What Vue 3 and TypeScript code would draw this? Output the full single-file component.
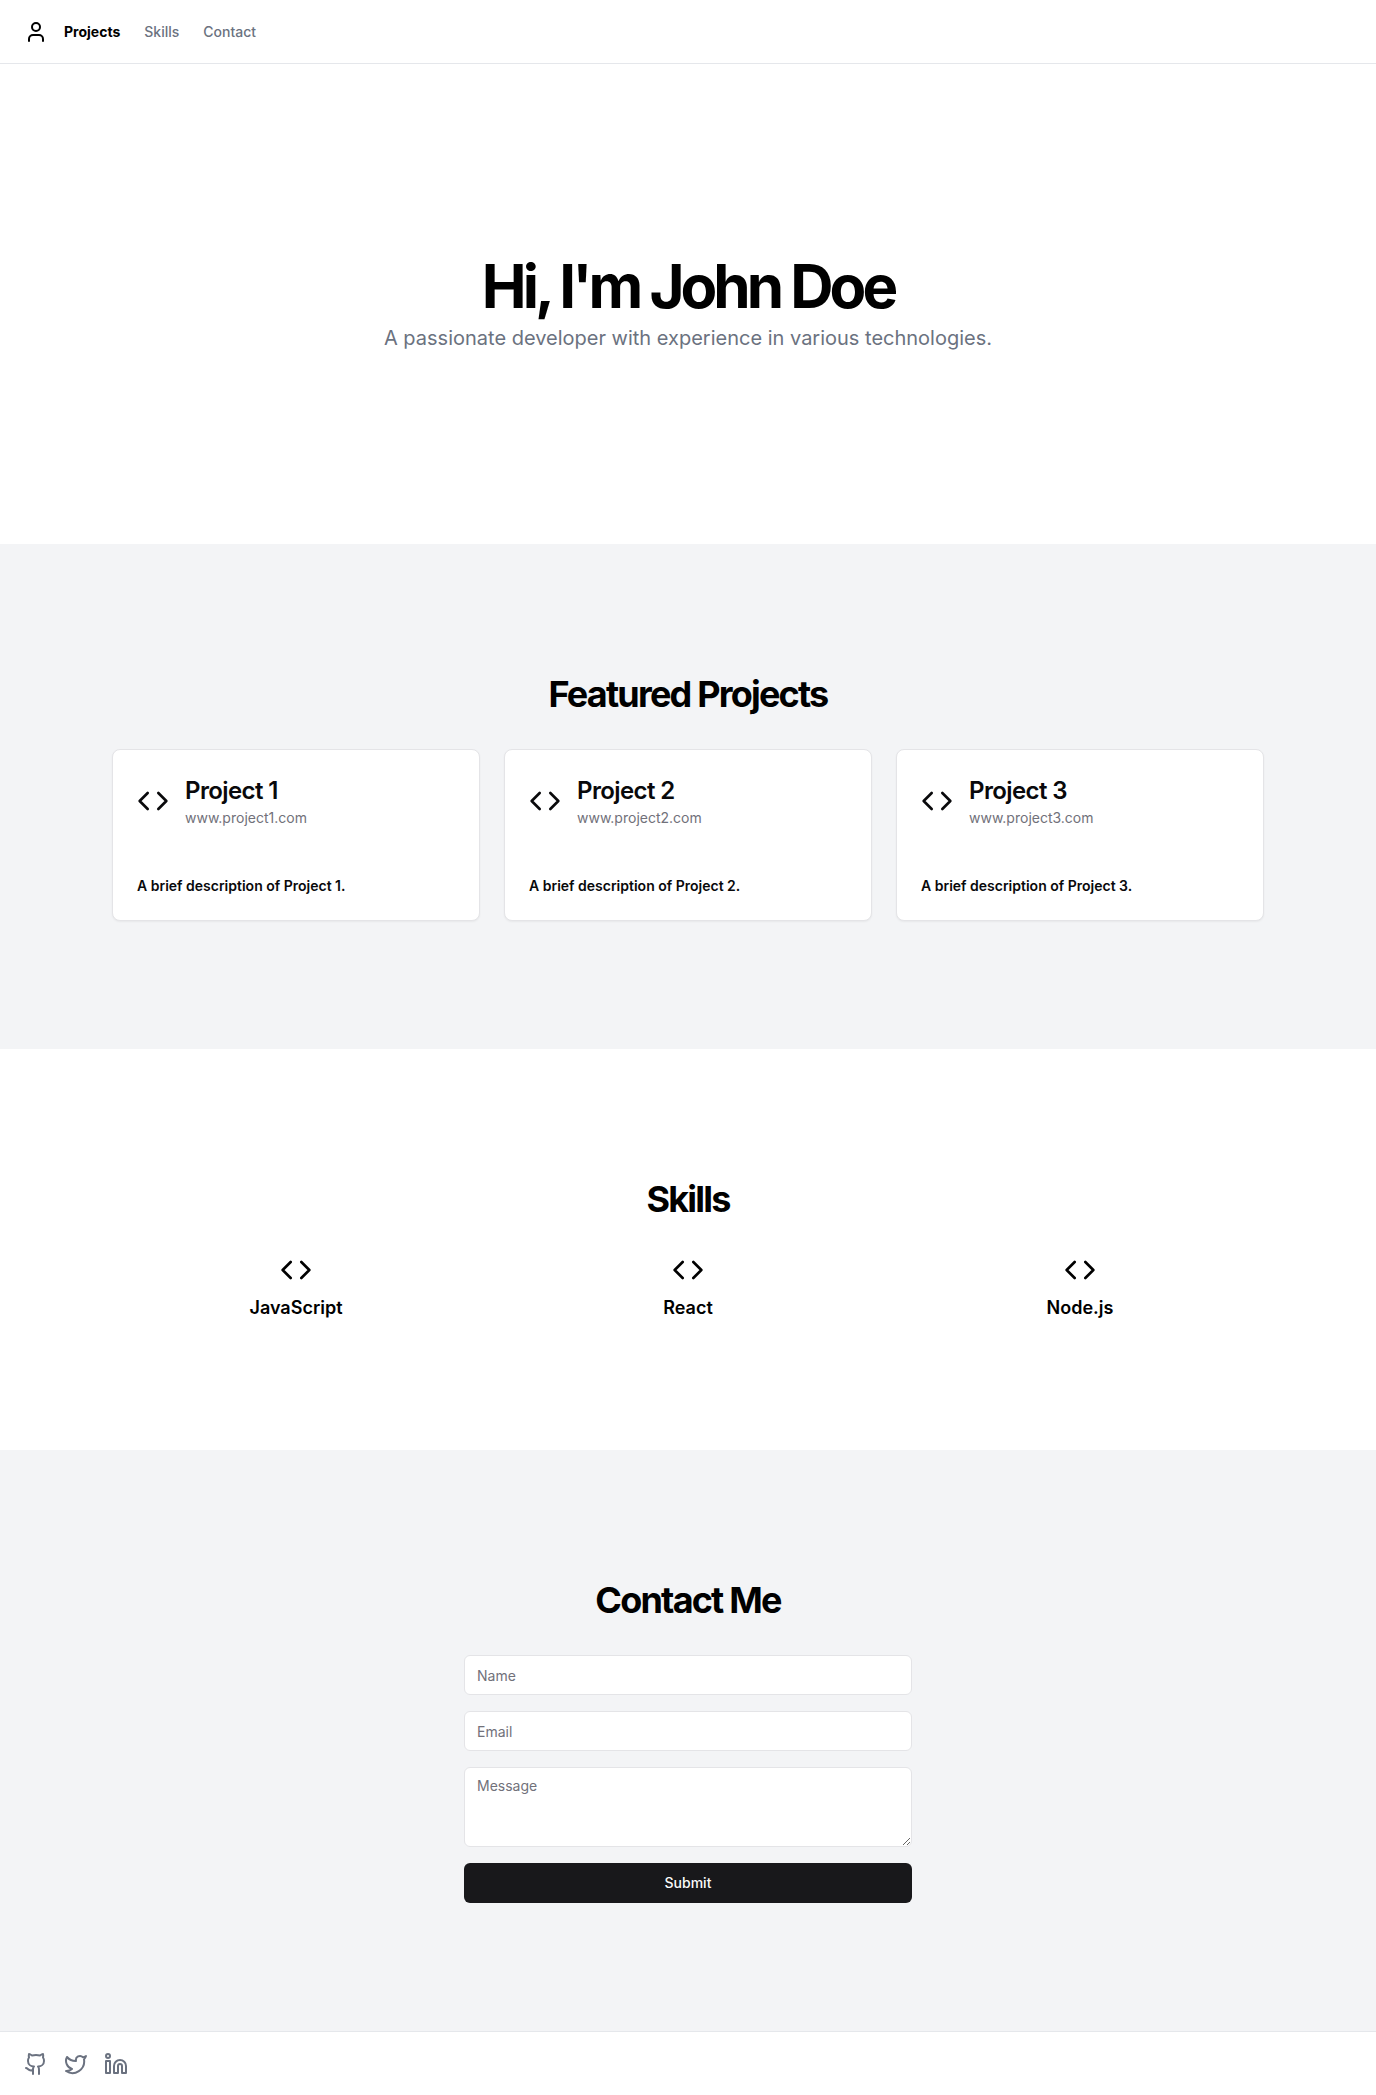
<script setup lang="ts">
import { ref } from 'vue'

interface Project {
  id: number
  title: string
  site: string
  description: string
}

const links = [
  { label: 'Projects', target: '#projects' },
  { label: 'Skills', target: '#skills' },
  { label: 'Contact', target: '#contact' },
]

const projects: Project[] = [1, 2, 3].map((id) => ({
  id,
  title: `Project ${id}`,
  site: `www.project${id}.com`,
  description: `A brief description of Project ${id}.`,
}))

const skills: string[] = ['JavaScript', 'React', 'Node.js']

const socials = [
  {
    label: 'GitHub',
    paths: [
      'M15 22v-4a4.8 4.8 0 0 0-1-3.5c3 0 6-2 6-5.5.08-1.25-.27-2.48-1-3.5.28-1.15.28-2.35 0-3.5 0 0-1 0-3 1.5-2.64-.5-5.36-.5-8 0C6 2 5 2 5 2c-.3 1.15-.3 2.35 0 3.5A5.403 5.403 0 0 0 4 9c0 3.5 3 5.5 6 5.5-.39.49-.68 1.05-.85 1.65-.17.6-.22 1.23-.15 1.85v4',
      'M9 18c-4.51 2-5-2-7-2',
    ],
  },
  {
    label: 'Twitter',
    paths: [
      'M22 4s-.7 2.1-2 3.4c1.6 10-9.4 17.3-18 11.6 2.2.1 4.4-.6 6-2C3 15.5.5 9.6 3 5c2.2 2.6 5.6 4.1 9 4-.9-4.2 4-6.6 7-3.8 1.1 0 3-1.2 3-1.2z',
    ],
  },
  {
    label: 'LinkedIn',
    paths: [
      'M16 8a6 6 0 0 1 6 6v7h-4v-7a2 2 0 0 0-2-2 2 2 0 0 0-2 2v7h-4v-7a6 6 0 0 1 6-6z',
      'M2 9h4v12H2z',
      'M2 4a2 2 0 1 0 4 0a2 2 0 1 0-4 0',
    ],
  },
]

const name = ref('')
const email = ref('')
const message = ref('')
</script>

<template>
  <div class="page">
    <header class="topbar">
      <a class="home" href="#" aria-label="Home">
        <svg class="icon" viewBox="0 0 24 24" aria-hidden="true">
          <path d="M19 21v-2a4 4 0 0 0-4-4H9a4 4 0 0 0-4 4v2" />
          <circle cx="12" cy="7" r="4" />
        </svg>
      </a>
      <nav class="nav">
        <a
          v-for="(link, index) in links"
          :key="link.label"
          class="nav-link"
          :class="{ active: index === 0 }"
          :href="link.target"
        >{{ link.label }}</a>
      </nav>
    </header>

    <main>
      <section class="hero">
        <h1>Hi, I'm John Doe</h1>
        <p>A passionate developer with experience in various technologies.</p>
      </section>

      <section id="projects" class="section tinted">
        <h2>Featured Projects</h2>
        <div class="columns">
          <article v-for="project in projects" :key="project.id" class="card">
            <div class="card-head">
              <svg class="icon large" viewBox="0 0 24 24" aria-hidden="true">
                <polyline points="16 18 22 12 16 6" />
                <polyline points="8 6 2 12 8 18" />
              </svg>
              <div>
                <h3>{{ project.title }}</h3>
                <p class="site">{{ project.site }}</p>
              </div>
            </div>
            <p class="description">{{ project.description }}</p>
          </article>
        </div>
      </section>

      <section id="skills" class="section">
        <h2>Skills</h2>
        <div class="columns">
          <div v-for="skill in skills" :key="skill" class="skill">
            <svg class="icon large" viewBox="0 0 24 24" aria-hidden="true">
              <polyline points="16 18 22 12 16 6" />
              <polyline points="8 6 2 12 8 18" />
            </svg>
            <h3>{{ skill }}</h3>
          </div>
        </div>
      </section>

      <section id="contact" class="section tinted">
        <h2>Contact Me</h2>
        <form class="form" @submit.prevent>
          <input v-model="name" class="field" type="text" placeholder="Name" aria-label="Name" />
          <input v-model="email" class="field" type="email" placeholder="Email" aria-label="Email" />
          <textarea v-model="message" class="field area" placeholder="Message" aria-label="Message"></textarea>
          <button class="submit" type="submit">Submit</button>
        </form>
      </section>
    </main>

    <footer class="footer">
      <a v-for="social in socials" :key="social.label" href="#" :aria-label="social.label">
        <svg class="icon" viewBox="0 0 24 24" aria-hidden="true">
          <path v-for="d in social.paths" :key="d" :d="d" />
        </svg>
      </a>
    </footer>
  </div>
</template>

<style>
body {
  margin: 0;
  background: #ffffff;
}
</style>

<style scoped>
.page {
  color: #000000;
  font-family: Inter, 'Liberation Sans', sans-serif;
  font-size: 14px;
  line-height: 20px;
}

.page *,
.page {
  box-sizing: border-box;
}

h1,
h2,
h3,
p {
  margin: 0;
}

a {
  color: inherit;
  text-decoration: none;
}

.icon {
  display: block;
  flex: none;
  width: 24px;
  height: 24px;
  fill: none;
  stroke: currentColor;
  stroke-width: 2;
  stroke-linecap: round;
  stroke-linejoin: round;
}

.icon.large {
  width: 32px;
  height: 32px;
}

.topbar {
  display: flex;
  align-items: center;
  gap: 16px;
  height: 64px;
  padding: 0 24px;
  border-bottom: 1px solid #e5e7eb;
}

.nav {
  display: flex;
  gap: 24px;
}

.nav-link {
  color: #6b7280;
  font-weight: 500;
}

.nav-link.active {
  color: #000000;
  font-weight: 700;
}

.hero {
  display: flex;
  flex-direction: column;
  align-items: center;
  gap: 8px;
  padding: 192px 24px;
  text-align: center;
}

.hero h1 {
  font-size: 60px;
  font-weight: 700;
  line-height: 60px;
  letter-spacing: -4px;
}

.hero p {
  color: #6b7280;
  font-size: 20px;
  line-height: 28px;
}

.section {
  display: flex;
  flex-direction: column;
  align-items: center;
  gap: 32px;
  padding: 128px 24px;
}

.tinted {
  background: #f3f4f6;
}

.section h2 {
  font-size: 36px;
  font-weight: 700;
  line-height: 45px;
  letter-spacing: -0.05em;
}

.columns {
  display: grid;
  grid-template-columns: repeat(auto-fit, minmax(240px, 1fr));
  gap: 24px;
  width: 100%;
  max-width: 1152px;
}

.card {
  display: flex;
  flex-direction: column;
  gap: 48px;
  padding: 24px;
  border: 1px solid #e4e4e7;
  border-radius: 8px;
  background: #ffffff;
  color: #09090b;
  box-shadow: 0 1px 2px rgba(0, 0, 0, 0.05);
}

.card-head {
  display: flex;
  align-items: center;
  gap: 16px;
}

.card h3 {
  font-size: 24px;
  font-weight: 600;
  line-height: 34px;
  letter-spacing: -0.025em;
}

.site {
  color: #71717a;
}

.description {
  font-weight: 600;
}

.skill {
  display: flex;
  flex-direction: column;
  align-items: center;
  gap: 8px;
}

.skill h3 {
  font-size: 18px;
  font-weight: 600;
  line-height: 28px;
}

.form {
  display: flex;
  flex-direction: column;
  gap: 16px;
  width: 100%;
  max-width: 448px;
}

.field {
  display: block;
  width: 100%;
  height: 40px;
  margin: 0;
  padding: 8px 12px;
  border: 1px solid #e4e4e7;
  border-radius: 6px;
  background: #ffffff;
  color: #09090b;
  font: inherit;
}

.field::placeholder {
  color: #71717a;
}

.area {
  height: 80px;
  resize: vertical;
}

.submit {
  height: 40px;
  border: 0;
  border-radius: 6px;
  background: #18181b;
  color: #fafafa;
  font: inherit;
  font-weight: 500;
  cursor: pointer;
}

.footer {
  display: flex;
  align-items: center;
  gap: 16px;
  height: 64px;
  padding: 0 24px;
  border-top: 1px solid #e5e7eb;
  color: #6b7280;
}
</style>
